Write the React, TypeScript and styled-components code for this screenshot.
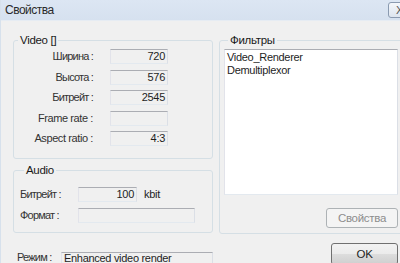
import { Fragment } from "react";
import styled, { createGlobalStyle } from "styled-components";

const GlobalStyle = createGlobalStyle`
  html, body { margin: 0; padding: 0; background: #f0f0f0; }
  body { font-family: "Liberation Sans", Arial, sans-serif; }
`;

const Frame = styled.div`
  width: 400px;
  height: 263px;
  overflow: hidden;
  background: #f0f0f0;
  border-left: 1px solid #d7e1ec;
  box-sizing: border-box;
`;

const Window = styled.div`
  width: 404px;
  font-size: 11px;
  letter-spacing: -0.3px;
  color: #1e1e1e;
`;

const TitleBar = styled.div`
  height: 21px;
  display: flex;
  align-items: flex-start;
  justify-content: space-between;
  padding-left: 4px;
  background: linear-gradient(#dce6f3, #d6e1ef);
  border-bottom: 1px solid #e6ecf3;
  box-sizing: border-box;
`;

const Title = styled.span`
  font-size: 12px;
  line-height: 21px;
  letter-spacing: -0.5px;
  color: #2a2a2a;
`;

const CloseBox = styled.div`
  width: 30px;
  height: 16px;
  margin-right: -13px;
  margin-top: 2px;
  border: 1px solid #8a9ab0;
  border-radius: 3px;
  background: linear-gradient(#f4f7fb, #dde5ef);
  box-sizing: border-box;
  display: flex;
  align-items: center;
  padding-left: 7px;
  font-size: 11px;
  color: #555;
`;

const Body = styled.div`
  display: flex;
  gap: 6px;
  padding: 13px 0 0 12px;
`;

const Column = styled.div<{ $w: number }>`
  width: ${(p) => p.$w}px;
  display: flex;
  flex-direction: column;
  align-items: stretch;
`;

const Group = styled.fieldset<{ $pad: string; $mt?: number }>`
  margin: ${(p) => p.$mt ?? 0}px 0 0 0;
  padding: ${(p) => p.$pad};
  border: 1px solid #d5dfe5;
  border-radius: 3px;
  min-width: 0;
`;

const Legend = styled.legend`
  margin-left: 4px;
  padding: 0 2px;
  line-height: 13px;
  font-size: 11.5px;
  color: #1a1a1a;
`;

const FieldGrid = styled.div<{ $cols: string; $gap: number; $rowGap: number; $align: string }>`
  display: grid;
  grid-template-columns: ${(p) => p.$cols};
  column-gap: ${(p) => p.$gap}px;
  row-gap: ${(p) => p.$rowGap}px;
  align-items: center;
  justify-items: ${(p) => p.$align};
`;

const Label = styled.span<{ $narrow?: boolean }>`
  color: #333;
  white-space: nowrap;
  line-height: 15px;
  letter-spacing: ${(p) => (p.$narrow ? "-0.8px" : "-0.4px")};
`;

const Field = styled.div<{ $w: number }>`
  width: ${(p) => p.$w}px;
  height: 15px;
  box-sizing: border-box;
  border: 1px solid;
  border-color: #abadb3 #dbdfe6 #e3e9ef #e2e3ea;
  background: #f0f0f0;
  text-align: right;
  padding-right: 2px;
  line-height: 13px;
  color: #1e1e1e;
`;

const Unit = styled.span`
  margin-left: 7px;
  line-height: 15px;
`;

const Inline = styled.div`
  display: flex;
  align-items: center;
`;

const ModeRow = styled.div`
  display: flex;
  align-items: flex-start;
  margin-top: 19px;
  padding-left: 4px;
`;

const ModeLabel = styled.span`
  width: 44px;
  color: #333;
  line-height: 11px;
  letter-spacing: -0.8px;
`;

const ModeBox = styled.div`
  flex: 1;
  height: 20px;
  box-sizing: border-box;
  border: 1px solid;
  border-color: #abadb3 #dbdfe6 #e3e9ef #e2e3ea;
  background: #f0f0f0;
  padding: 0 0 0 2px;
  line-height: 10px;
  color: #1e1e1e;
`;

const ListBox = styled.div`
  height: 146px;
  box-sizing: border-box;
  border: 1px solid;
  border-color: #abadb3 #dbdfe6 #e3e9ef #e2e3ea;
  background: #fff;
  padding: 1px 2px;
  line-height: 13px;
  color: #1e1e1e;
`;

const ButtonRow = styled.div<{ $mt: number; $mr: number }>`
  display: flex;
  justify-content: flex-end;
  margin-top: ${(p) => p.$mt}px;
  margin-right: ${(p) => p.$mr}px;
`;

const Button = styled.button<{ $w: number; $h: number }>`
  width: ${(p) => p.$w}px;
  height: ${(p) => p.$h}px;
  font-family: inherit;
  font-size: 11.5px;
  letter-spacing: -0.3px;
  border-radius: 3px;
  border: 1px solid #707070;
  background: linear-gradient(#f2f2f2 0%, #ebebeb 50%, #dddddd 51%, #cfcfcf 100%);
  color: #1e1e1e;
  padding: 0;
  &:disabled {
    border-color: #adb2b5;
    background: #f4f4f4;
    color: #8d8d8d;
  }
`;

const videoRows: [string, string, boolean][] = [
  ["Ширина :", "720", true],
  ["Высота :", "576", true],
  ["Битрейт :", "2545", true],
  ["Frame rate :", "", false],
  ["Aspect ratio :", "4:3", false],
];

export default function App() {
  return (
    <Frame>
      <GlobalStyle />
      <Window>
        <TitleBar>
          <Title>Свойства</Title>
          <CloseBox>X</CloseBox>
        </TitleBar>
        <Body>
          <Column $w={200}>
            <Group $pad="2px 0 12px 0">
              <Legend>Video []</Legend>
              <FieldGrid $cols="79px 58px" $gap={17} $rowGap={5.5} $align="end">
                {videoRows.map(([l, v, cyr]) => (
                  <Fragment key={l}>
                    <Label $narrow={cyr}>{l}</Label>
                    <Field $w={58}>{v}</Field>
                  </Fragment>
                ))}
              </FieldGrid>
            </Group>
            <Group $pad="10.5px 0 9px 6px" $mt={4.5}>
              <Legend>Audio</Legend>
              <FieldGrid $cols="58px auto" $gap={0} $rowGap={6} $align="start">
                <Label $narrow>Битрейт :</Label>
                <Inline>
                  <Field $w={59}>100</Field>
                  <Unit>kbit</Unit>
                </Inline>
                <Label $narrow>Формат :</Label>
                <Field $w={117}></Field>
              </FieldGrid>
            </Group>
            <ModeRow>
              <ModeLabel>Режим :</ModeLabel>
              <ModeBox>Enhanced video render</ModeBox>
            </ModeRow>
          </Column>
          <Column $w={184}>
            <Group $pad="2px 4px 5px 4px">
              <Legend>Фильтры</Legend>
              <ListBox>
                <div>Video_Renderer</div>
                <div>Demultiplexor</div>
              </ListBox>
              <ButtonRow $mt={13} $mr={0}>
                <Button $w={72} $h={20} disabled>
                  Свойства
                </Button>
              </ButtonRow>
            </Group>
            <ButtonRow $mt={9} $mr={5}>
              <Button $w={67} $h={22}>OK</Button>
            </ButtonRow>
          </Column>
        </Body>
      </Window>
    </Frame>
  );
}
